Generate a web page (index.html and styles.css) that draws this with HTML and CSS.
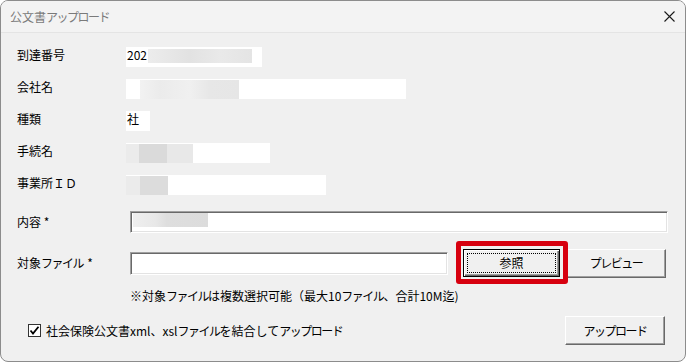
FILE: index.html
```html
<!DOCTYPE html>
<html lang="ja">
<head>
<meta charset="utf-8">
<title>公文書アップロード</title>
<link rel="stylesheet" href="styles.css">
</head>
<body>
<div class="dialog">
  <div class="titlebar">
    <span class="title">公文書<span class="hw">アップロード</span></span>
    <span class="close"><svg width="11" height="11" viewBox="0 0 11 11"><path d="M0.5 0.5 L10.5 10.5 M10.5 0.5 L0.5 10.5" stroke="#1a1a1a" stroke-width="1.1" fill="none"/></svg></span>
  </div>
  <div class="content">
    <div class="info">
      <div class="label">到達番号</div>
      <div class="val w136"><span class="txt">202</span><span class="blur b1"></span></div>
      <div class="label">会社名</div>
      <div class="val w280"><span class="blur b2"></span></div>
      <div class="label">種類</div>
      <div class="val w24"><span class="txt">社</span></div>
      <div class="label">手続名</div>
      <div class="val w144"><span class="blur b3"></span></div>
      <div class="label">事業所ＩＤ</div>
      <div class="val w200"><span class="blur b4"></span></div>
    </div>

    <div class="row row-content">
      <div class="flabel">内容 *</div>
      <div class="input wide"><span class="blur b5"></span></div>
    </div>

    <div class="row row-file">
      <div class="flabel">対象<span class="hw">ファイル</span> *</div>
      <div class="input file"></div>
      <button class="btn btn-focus highlight"><span class="focus">参照</span></button>
      <button class="btn btn-preview"><span class="hw">プレビュー</span></button>
    </div>

    <div class="note">※対象<span class="hw">ファイル</span>は複数選択可能（最大10<span class="hw">ファイル</span>、合計10M迄)</div>

    <div class="bottom">
      <label class="check">
        <span class="box"><svg width="11" height="11" viewBox="0 0 11 11"><path d="M1.5 5.5 L4 8.5 L9.5 1.8" stroke="#000" stroke-width="1.8" fill="none"/></svg></span>
        <span>社会保険公文書xml、xsl<span class="hw">ファイル</span>を結合して<span class="hw">アップロード</span></span>
      </label>
      <button class="btn btn-upload"><span class="hw">アップロード</span></button>
    </div>
  </div>
</div>
</body>
</html>
```

FILE: styles.css
```css
* { box-sizing: border-box; }
html, body { margin: 0; padding: 0; background: #ffffff; }
body {
  font-family: "Noto Sans CJK JP", "Noto Sans", sans-serif;
  font-size: 12px;
  color: #000;
  width: 686px;
  height: 362px;
  overflow: hidden;
}
.hw { letter-spacing: -1.5px; }
.flabel .hw { margin-right: 1.5px; }
.dialog {
  width: 686px;
  height: 362px;
  border: 1px solid #8c8c8c;
  border-radius: 8px;
  background: #f0f0f0;
  overflow: hidden;
  display: flex;
  flex-direction: column;
}
.titlebar {
  height: 32px;
  flex: none;
  background: #f3f3f3;
  border-bottom: 1px solid #e4e4e4;
  display: flex;
  align-items: center;
  justify-content: space-between;
  padding: 0 9px 0 9px;
}
.title { color: #7a7a7a; font-size: 12px; line-height: 16px; }
.close { display: flex; width: 11px; height: 11px; margin-right: 1px; }

.content {
  padding: 14px 17px 0 16px;
  flex: 1;
  display: flex;
  flex-direction: column;
}
.info {
  display: grid;
  grid-template-columns: 109px auto;
  grid-auto-rows: 20px;
  row-gap: 12px;
  align-items: start;
}
.label { line-height: 16px; padding-top: 0; }
.val {
  height: 20px;
  background: #ffffff;
  position: relative;
  line-height: 16px;
  padding-left: 1px;
  display: flex;
}
.w136 { width: 136px; }
.w280 { width: 280px; }
.w24 { width: 24px; }
.w144 { width: 144px; }
.w200 { width: 200px; }
.txt { line-height: 16px; }
.blur { position: absolute; display: block; }
.b1 { left: 22px; top: 2px; width: 104px; height: 14px; background: linear-gradient(90deg, #ececec, #e2e2e2 40%, #e9e9e9 70%, #e4e4e4); }
.b2 { left: 14px; top: 1px; width: 99px; height: 19px; background: linear-gradient(90deg, #f2f2f2, #ebebeb 20%, #f0f0f0 50%, #e7e7e7 70%, #e6e6e6); }
.b3 { left: 0; top: 1px; width: 67px; height: 19px; background: linear-gradient(90deg, #ebebeb 0, #ebebeb 20%, #dadada 20%, #dadada 61%, #e8e8e8 61%); }
.b4 { left: 0; top: 1px; width: 42px; height: 19px; background: linear-gradient(90deg, #ebebeb 0, #ebebeb 33%, #dcdcdc 33%); }
.b5 { left: 2px; top: 1px; width: 75px; height: 14px; background: linear-gradient(90deg, #efefef, #e8e8e8 30%, #dedede 45%, #dcdcdc); }

.row { display: flex; align-items: center; }
.flabel { width: 113px; flex: none; line-height: 16px; }
.row-content { margin-top: 16px; height: 22px; }
.input {
  background: #fff;
  border-top: 1px solid #a0a0a0;
  border-left: 1px solid #a0a0a0;
  border-bottom: 1px solid #ffffff;
  border-right: 1px solid #ffffff;
  box-shadow: inset 1px 1px 0 #696969, inset -1px -1px 0 #e3e3e3;
  position: relative;
}
.wide { width: 539px; height: 22px; }
.row-file { margin-top: 16px; height: 28px; }
.file { width: 318px; height: 23px; }

.btn {
  font-family: inherit;
  font-size: 12px;
  color: #000;
  background: #f0f0f0;
  border-top: 1px solid #ffffff;
  border-left: 1px solid #ffffff;
  border-bottom: 1px solid #696969;
  border-right: 1px solid #696969;
  box-shadow: inset -1px -1px 0 #a0a0a0;
  padding: 0;
  height: 29px;
  line-height: 16px;
  display: flex;
  align-items: center;
  justify-content: center;
}
.btn-focus {
  width: 97px;
  height: 28px;
  margin-left: 15px;
  border: 1px solid #000;
  box-shadow: inset 1px 1px 0 #ffffff, inset -1px -1px 0 #696969, inset -2px -2px 0 #a0a0a0;
  padding: 3px;
  position: relative;
}
.focus {
  flex: 1;
  align-self: stretch;
  display: flex;
  align-items: center;
  justify-content: center;
  border: 1px dotted #000;
}
.highlight::after {
  content: "";
  position: absolute;
  left: -8px;
  top: -9px;
  right: -9px;
  bottom: -8px;
  border: 5px solid #d7000f;
  border-radius: 3px;
}
.btn-preview { width: 100px; margin-left: 6px; }

.note { margin-top: 11px; margin-left: 113px; line-height: 16px; }

.bottom {
  margin-top: 12px;
  display: flex;
  align-items: center;
  justify-content: space-between;
  height: 29px;
}
.check {
  display: flex;
  align-items: center;
  margin-left: 11px;
  line-height: 16px;
}
.box {
  width: 13px;
  height: 13px;
  background: #fff;
  border: 1px solid #333;
  display: flex;
  align-items: center;
  justify-content: center;
  margin-right: 5px;
}
.btn-upload { width: 100px; margin-right: 3px; height: 29px; }
```
